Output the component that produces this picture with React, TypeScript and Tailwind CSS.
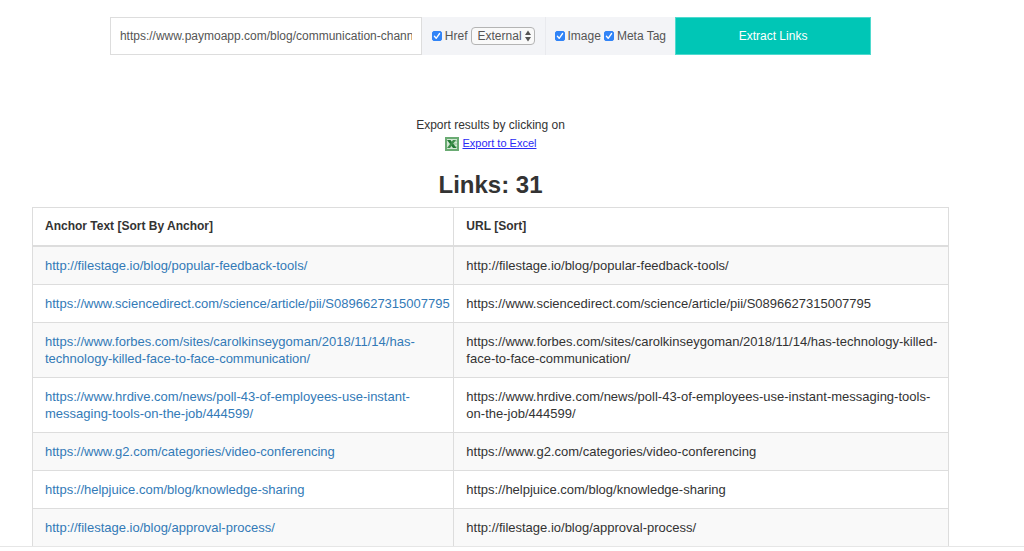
import React, { useState } from 'react';

const links = [
  'http://filestage.io/blog/popular-feedback-tools/',
  'https://www.sciencedirect.com/science/article/pii/S0896627315007795',
  'https://www.forbes.com/sites/carolkinseygoman/2018/11/14/has-technology-killed-face-to-face-communication/',
  'https://www.hrdive.com/news/poll-43-of-employees-use-instant-messaging-tools-on-the-job/444599/',
  'https://www.g2.com/categories/video-conferencing',
  'https://helpjuice.com/blog/knowledge-sharing',
  'http://filestage.io/blog/approval-process/',
];

const ExcelIcon = () => (
  <svg width="14" height="14" viewBox="0 0 14 14" aria-hidden="true">
    <rect x="1" y="1" width="12" height="12" fill="#d3e8d4" stroke="#6aab73" strokeWidth="2" />
    <path d="M9 4h3M9 7h3M9 10h3" stroke="#8cc093" fill="none" />
    <path d="M2 3h3.500l6 8H8z" fill="#237a35" />
    <path d="M11 3H8L2 11h3z" fill="#3f8f4b" />
  </svg>
);

interface CheckProps {
  label: string;
  checked: boolean;
  onChange: (value: boolean) => void;
}

const Check = ({ label, checked, onChange }: CheckProps) => (
  <label className="flex items-center gap-[3px]">
    <span className="grid h-[10px] w-[10px] place-items-center">
      <input
        type="checkbox"
        checked={checked}
        onChange={(e) => onChange(e.target.checked)}
        className="col-start-1 row-start-1 h-[10px] w-[10px] appearance-none rounded-[2px] border border-[#aaa] bg-white checked:border-[#3184f7] checked:bg-[#3184f7]"
      />
      {checked && (
        <svg className="pointer-events-none col-start-1 row-start-1" width="10" height="10" viewBox="0 0 10 10" aria-hidden="true">
          <path d="M2.400 5.300l1.800 2L7.600 2.500" fill="none" stroke="#fff" strokeWidth="1.300" strokeLinecap="round" strokeLinejoin="round" />
        </svg>
      )}
    </span>
    {label}
  </label>
);

const SearchForm = () => {
  const [url, setUrl] = useState('https://www.paymoapp.com/blog/communication-channels/');
  const [href, setHref] = useState(true);
  const [image, setImage] = useState(true);
  const [meta, setMeta] = useState(true);

  return (
    <form className="mx-auto flex h-[38px] w-[83%] text-[#555]" onSubmit={(e) => e.preventDefault()}>
      <input
        type="text"
        aria-label="Page URL"
        value={url}
        onChange={(e) => setUrl(e.target.value)}
        className="min-w-0 flex-1 border border-[#ddd] bg-white px-[9px] text-[#555] outline-none"
      />
      <div className="flex items-center gap-[3px] border-r border-[#e9eaee] bg-[#f3f4f7] px-[10px]">
        <Check label="Href" checked={href} onChange={setHref} />
        <span className="grid items-center">
          <select
            aria-label="Link type"
            defaultValue="External"
            className="col-start-1 row-start-1 h-[18px] w-[64px] appearance-none rounded-[4px] border border-[#b4b4b4] bg-[#f9f9f9] pl-[6px] text-[#555]"
          >
            <option>External</option>
            <option>Internal</option>
            <option>All</option>
          </select>
          <svg className="pointer-events-none col-start-1 row-start-1 mr-1 justify-self-end" width="6" height="12" viewBox="0 0 6 12" aria-hidden="true">
            <path d="M3 0.500l3 4.500h-6zM3 11.500l3-4.500h-6z" fill="#555" />
          </svg>
        </span>
      </div>
      <div className="flex items-center gap-[3px] bg-[#f3f4f7] px-[9px]">
        <Check label="Image" checked={image} onChange={setImage} />
        <Check label="Meta Tag" checked={meta} onChange={setMeta} />
      </div>
      <button type="submit" className="w-[196px] border border-[#4edace] bg-[#00c6b6] text-white">
        Extract Links
      </button>
    </form>
  );
};

export default function App() {
  return (
    <div className="border-b border-[#e6e6e6] bg-white font-['Liberation_Sans',Arial,sans-serif] text-[12px] leading-[17px] text-[#333]">
      <main className="pt-[17px] pr-[75px] pl-8">
        <SearchForm />

        <section className="mt-[62px] flex flex-col items-center">
          <p>Export results by clicking on</p>
          <a href="#export" className="mt-px flex items-center gap-1 text-[11px] text-[#2a2af5] underline">
            <ExcelIcon />
            Export to Excel
          </a>
          <h1 className="mt-[19px] text-[24px] leading-7 font-bold">Links: 31</h1>
        </section>

        <table className="mt-2 w-full table-fixed border-collapse border border-b-0 border-[#ddd]">
          <thead>
            <tr className="border-b-2 border-[#ddd] text-left">
              <th className="w-[46%] border-r border-[#ddd] px-3 py-[10px] font-bold">Anchor Text [Sort By Anchor]</th>
              <th className="px-3 py-[10px] font-bold">URL [Sort]</th>
            </tr>
          </thead>
          <tbody className="text-[13px]">
            {links.map((link) => (
              <tr key={link} className="border-t border-[#ddd] odd:bg-[#f9f9f9]">
                <td className="border-r border-[#ddd] py-[10px] pr-1 pl-3">
                  <a href={link} className="text-[#337ab7]">{link}</a>
                </td>
                <td className="py-[10px] pr-1 pl-3">{link}</td>
              </tr>
            ))}
          </tbody>
        </table>
      </main>
    </div>
  );
}
